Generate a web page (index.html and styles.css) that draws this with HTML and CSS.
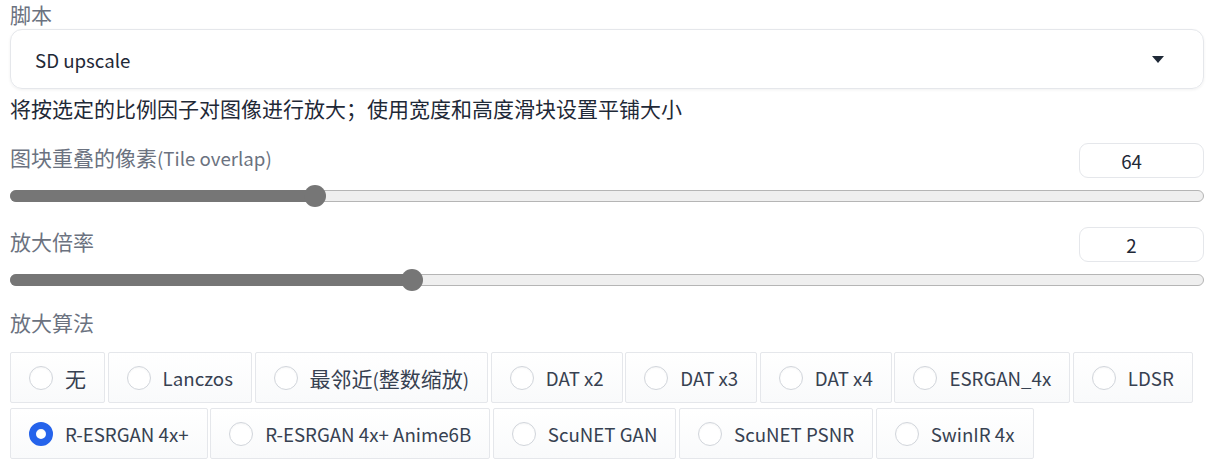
FILE: index.html
```html
<!DOCTYPE html>
<html lang="zh">
<head>
<meta charset="utf-8">
<link rel="stylesheet" href="styles.css">
</head>
<body>
<div class="page">
  <div class="field">
    <div class="label">脚本</div>
    <div class="dropdown">
      <span class="dd-value lat">SD upscale</span>
      <svg class="dd-arrow" width="12" height="7" viewBox="0 0 12 7"><path d="M0 0 H12 L6 7 Z" fill="#1f2937"/></svg>
    </div>
  </div>
  <p class="desc">将按选定的比例因子对图像进行放大；使用宽度和高度滑块设置平铺大小</p>

  <div class="slider-block">
    <div class="slider-head">
      <span class="label">图块重叠的像素<span class="lat">(Tile overlap)</span></span>
      <div class="numbox lat">64</div>
    </div>
    <div class="track">
      <div class="fill" style="width: calc(11px + (100% - 22px) * 0.25)"></div>
      <div class="thumb" style="left: calc(11px + (100% - 22px) * 0.25)"></div>
    </div>
  </div>

  <div class="slider-block">
    <div class="slider-head">
      <span class="label">放大倍率</span>
      <div class="numbox lat">2</div>
    </div>
    <div class="track">
      <div class="fill" style="width: calc(11px + (100% - 22px) * 0.3333)"></div>
      <div class="thumb" style="left: calc(11px + (100% - 22px) * 0.3333)"></div>
    </div>
  </div>

  <div class="radio-block">
    <div class="label">放大算法</div>
    <div class="radios">
      <label class="opt"><span class="circle"></span><span>无</span></label>
      <label class="opt"><span class="circle"></span><span class="lat">Lanczos</span></label>
      <label class="opt"><span class="circle"></span><span>最邻近<span class="lat">(</span>整数缩放<span class="lat">)</span></span></label>
      <label class="opt"><span class="circle"></span><span class="lat">DAT x2</span></label>
      <label class="opt"><span class="circle"></span><span class="lat">DAT x3</span></label>
      <label class="opt"><span class="circle"></span><span class="lat">DAT x4</span></label>
      <label class="opt"><span class="circle"></span><span class="lat">ESRGAN_4x</span></label>
      <label class="opt"><span class="circle"></span><span class="lat">LDSR</span></label>
      <label class="opt"><span class="circle checked"></span><span class="lat">R-ESRGAN 4x+</span></label>
      <label class="opt"><span class="circle"></span><span class="lat">R-ESRGAN 4x+ Anime6B</span></label>
      <label class="opt"><span class="circle"></span><span class="lat">ScuNET GAN</span></label>
      <label class="opt"><span class="circle"></span><span class="lat">ScuNET PSNR</span></label>
      <label class="opt"><span class="circle"></span><span class="lat">SwinIR 4x</span></label>
    </div>
  </div>
</div>
</body>
</html>
```

FILE: styles.css
```css
* { box-sizing: border-box; }
html, body { margin: 0; padding: 0; background: #fff; }
body {
  font-family: "Noto Sans CJK SC", sans-serif;
  font-size: 21px;
  color: #1f2937;
}
.lat { font-size: 18.7px; }
.page {
  padding: 0 7px 0 10px;
}
.label {
  color: #6b7280;
  line-height: 28px;
}
.field .label { margin-bottom: 1px; }
.dropdown {
  height: 60px;
  border: 1px solid #e5e7eb;
  border-radius: 12px;
  box-shadow: 0 1px 3px rgba(0,0,0,0.06);
  display: flex;
  align-items: center;
  justify-content: space-between;
  padding: 0 39px 0 24px;
}
.dd-value { color: #1f2937; }
.dd-arrow { display: block; }
.desc {
  margin: 4px 0 0;
  line-height: 30px;
  color: #1f2937;
}
.slider-block { margin-top: 19px; }
.slider-block + .slider-block { margin-top: 24px; }
.slider-head {
  display: flex;
  justify-content: space-between;
  align-items: center;
  height: 36px;
}
.slider-head .label { margin-top: -6px; }
.numbox {
  width: 125px;
  height: 35px;
  border: 1px solid #e5e7eb;
  border-radius: 9px;
  display: flex;
  align-items: center;
  justify-content: center;
  padding-right: 20px;
  color: #1f2937;
}
.track {
  position: relative;
  margin-top: 12px;
  height: 12px;
  background: #efefef;
  border: 1px solid #b5b5b5;
  border-radius: 6px;
}
.fill {
  position: absolute;
  left: -1px;
  top: -1px;
  bottom: -1px;
  background: #767676;
  border-radius: 6px 0 0 6px;
}
.thumb {
  position: absolute;
  top: 50%;
  width: 22px;
  height: 22px;
  margin-left: -11px;
  margin-top: -11px;
  border-radius: 50%;
  background: #767676;
}
.radio-block { margin-top: 22px; }
.radios {
  margin-top: 16px;
  display: flex;
  flex-wrap: wrap;
  gap: 5px 2.6px;
}
.opt {
  display: flex;
  align-items: center;
  gap: 12px;
  height: 51px;
  padding: 0 18px;
  border: 1px solid #e5e7eb;
  border-radius: 2px;
  background: linear-gradient(#ffffff, #f9fafb);
  color: #374151;
  white-space: nowrap;
}
.circle {
  width: 24px;
  height: 24px;
  border-radius: 50%;
  border: 1px solid #d1d5db;
  background: #fff;
  box-shadow: inset 0 1px 2px rgba(0,0,0,0.04);
  flex: none;
}
.circle.checked {
  border: 7.5px solid #2563eb;
  background: #fff;
}
```
